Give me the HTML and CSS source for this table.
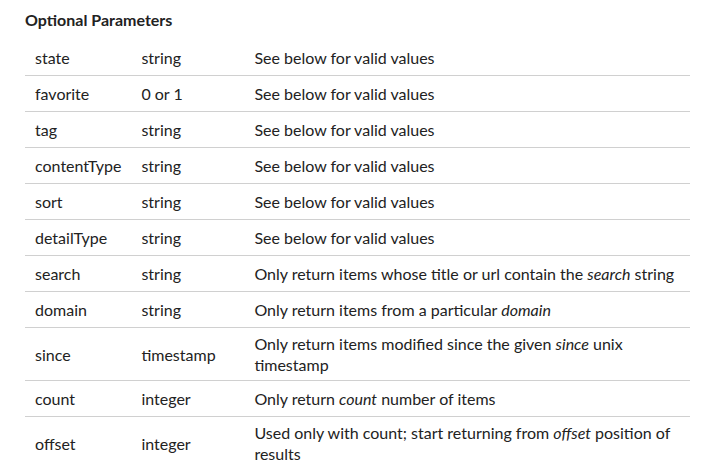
FILE: index.html
```html
<!DOCTYPE html>
<html>
<head>
<meta charset="utf-8">
<link rel="stylesheet" href="styles.css">
</head>
<body>
<div class="wrap">
  <h3 class="title">Optional Parameters</h3>
  <table class="params">
    <tr><td class="c1">state</td><td class="c2">string</td><td class="c3">See below for valid values</td></tr>
    <tr><td class="c1">favorite</td><td class="c2">0 or 1</td><td class="c3">See below for valid values</td></tr>
    <tr><td class="c1">tag</td><td class="c2">string</td><td class="c3">See below for valid values</td></tr>
    <tr><td class="c1">contentType</td><td class="c2">string</td><td class="c3">See below for valid values</td></tr>
    <tr><td class="c1">sort</td><td class="c2">string</td><td class="c3">See below for valid values</td></tr>
    <tr><td class="c1">detailType</td><td class="c2">string</td><td class="c3">See below for valid values</td></tr>
    <tr><td class="c1">search</td><td class="c2">string</td><td class="c3">Only return items whose title or url contain the <em>search</em> string</td></tr>
    <tr><td class="c1">domain</td><td class="c2">string</td><td class="c3">Only return items from a particular <em>domain</em></td></tr>
    <tr><td class="c1">since</td><td class="c2">timestamp</td><td class="c3">Only return items modified since the given <em>since</em> unix<br>timestamp</td></tr>
    <tr><td class="c1">count</td><td class="c2">integer</td><td class="c3">Only return <em>count</em> number of items</td></tr>
    <tr><td class="c1">offset</td><td class="c2">integer</td><td class="c3">Used only with count; start returning from <em>offset</em> position of results</td></tr>
  </table>
</div>
</body>
</html>
```
FILE: styles.css
```css
html, body {
  margin: 0;
  padding: 0;
  background: #fff;
}
body {
  font-family: "Lato", "Liberation Sans", sans-serif;
  font-size: 16px;
  color: #222;
}
.wrap {
  padding: 9px 25px 0 25px;
}
.title {
  margin: 0 0 10px 0;
  font-size: 16px;
  font-weight: 700;
  line-height: 21px;
  color: #222;
}
.params {
  border-collapse: collapse;
  width: 665px;
}
.params td {
  padding: 5px 10px;
  line-height: 21px;
  height: 25px;
  vertical-align: middle;
  border-bottom: 1px solid #d0d0d0;
}
.params tr:last-child td {
  border-bottom: none;
}
.params .c1 { width: 86px; }
.params .c2 { width: 93px; }
.params em { font-style: italic; }
```
